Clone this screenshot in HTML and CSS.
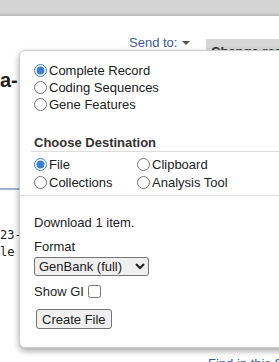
FILE: index.html
```html
<!DOCTYPE html>
<html>
<head>
<meta charset="utf-8">
<link rel="stylesheet" href="styles.css">
</head>
<body>
<div class="topbar"></div>
<div class="toolbar">
  <a class="sendto">Send to: <span class="caret"></span></a>
  <div class="changebox">Change region shown</div>
</div>
<h1 class="title">a-</h1>
<div class="rule"></div>
<pre class="seq">23-
le</pre>
<div class="find">Find in this Sequence</div>

<div class="panel">
  <div class="sec1">
    <label class="opt"><input type="radio" name="fmt" checked>Complete Record</label>
    <label class="opt"><input type="radio" name="fmt">Coding Sequences</label>
    <label class="opt"><input type="radio" name="fmt">Gene Features</label>
  </div>
  <div class="heading">Choose Destination</div>
  <div class="dest">
    <label class="opt"><input type="radio" name="dst" checked>File</label>
    <label class="opt"><input type="radio" name="dst">Clipboard</label>
    <label class="opt"><input type="radio" name="dst">Collections</label>
    <label class="opt"><input type="radio" name="dst">Analysis Tool</label>
  </div>
  <div class="sec3">
    <div class="line">Download 1 item.</div>
    <div class="line fmt">Format</div>
    <select class="sel"><option>GenBank (full)</option></select>
    <label class="line showgi">Show GI <input type="checkbox" class="chk"></label>
    <button class="btn">Create File</button>
  </div>
</div>
</body>
</html>
```
FILE: styles.css
```css
html, body {
  margin: 0;
  padding: 0;
  overflow: hidden;
  width: 279px;
  height: 362px;
  background: #fff;
  font-family: "Liberation Sans", Arial, sans-serif;
  font-size: 13px;
  color: #333;
}
.topbar {
  height: 16px;
  background: linear-gradient(to bottom, #d4d4d4 0, #d4d4d4 13px, #c4c4c4 14px, #b9b9b9 16px);
}
.toolbar {
  display: flex;
  align-items: flex-start;
  height: 35px;
  margin-top: 18px;
  padding-left: 129px;
}
.sendto {
  color: #3b5a9a;
  line-height: 17px;
  white-space: nowrap;
}
.caret {
  display: inline-block;
  width: 0;
  height: 0;
  border-left: 4px solid transparent;
  border-right: 4px solid transparent;
  border-top: 4px solid #555;
  vertical-align: 2px;
  margin-left: 1px;
}
.changebox {
  margin-left: 16px;
  margin-top: 5px;
  height: 30px;
  flex: 1;
  background: #d6d6d6;
  padding: 4px 5px;
  font-weight: bold;
  line-height: 17px;
  white-space: nowrap;
  overflow: hidden;
  color: #333;
}
.title {
  margin: 0;
  font-size: 20px;
  line-height: 22px;
  font-weight: bold;
  color: #222;
  white-space: nowrap;
}
.rule {
  margin-top: 97px;
  height: 2px;
  width: 40px;
  background: #9fb3cc;
}
.seq {
  margin: 37px 0 0 0;
  font-family: "DejaVu Sans Mono", monospace;
  font-size: 12px;
  line-height: 17px;
  color: #222;
}
.find {
  margin-top: 94px;
  padding-left: 208px;
  color: #3b5a9a;
  line-height: 17px;
  white-space: nowrap;
}
.panel {
  position: absolute;
  left: 19px;
  top: 50px;
  width: 320px;
  background: #fff;
  border: 1px solid #ccc;
  border-radius: 6px;
  box-shadow: 0 3px 6px rgba(0, 0, 0, 0.35);
  color: #222;
}
.opt {
  display: flex;
  align-items: center;
  height: 17px;
  white-space: nowrap;
}
.opt input {
  width: 13px;
  height: 13px;
  margin: 0 2px 0 0;
  accent-color: #3a7fd5;
}
.sec1 {
  padding: 11px 0 0 14px;
}
.heading {
  margin: 21px 0 0 11px;
  padding-left: 3px;
  font-weight: bold;
  line-height: 17px;
  color: #333;
  border-bottom: 1px solid #ddd;
}
.dest {
  display: grid;
  grid-template-columns: 103px auto;
  grid-auto-rows: 18px;
  padding: 3px 0 4px 14px;
  border-bottom: 1px solid #ddd;
}
.dest .opt {
  height: 18px;
}
.sec3 {
  padding: 18px 0 18px 14px;
  display: flex;
  flex-direction: column;
  align-items: flex-start;
}
.line {
  line-height: 17px;
  white-space: nowrap;
}
.fmt {
  margin-top: 7px;
}
.sel {
  margin-top: 2px;
  width: 115px;
  height: 19px;
  font-family: "Liberation Sans", Arial, sans-serif;
  font-size: 13px;
  color: #222;
  background-color: #efefef;
  border: 1px solid #767676;
  border-radius: 3px;
}
.showgi {
  margin-top: 7px;
  display: flex;
  align-items: center;
}
.chk {
  width: 13px;
  height: 13px;
  margin: 0 0 0 4px;
}
.btn {
  margin: 9px 0 0 2px;
  height: 20px;
  padding: 1px 5px;
  font-family: "Liberation Sans", Arial, sans-serif;
  font-size: 13px;
  color: #222;
  background-color: #efefef;
  border: 1px solid #767676;
  border-radius: 3px;
}
```
